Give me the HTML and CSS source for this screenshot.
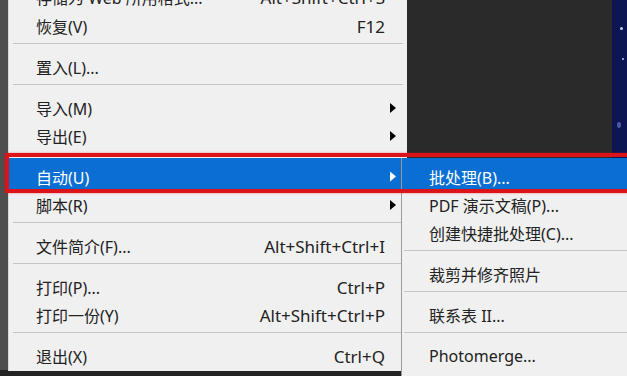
FILE: index.html
```html
<!DOCTYPE html>
<html lang="zh-CN">
<head>
  <meta charset="UTF-8">
  <title>文件菜单 - 自动</title>
  <link rel="stylesheet" href="styles.css">
</head>
<body>
  <div class="screen">
    <div class="edge"></div>

    <ul class="menu">
      <li class="item cut"><span class="label">存储为 Web 所用格式...</span><span class="key">Alt+Shift+Ctrl+S</span><span class="arrow"></span></li>
      <li class="item"><span class="label">恢复(V)</span><span class="key">F12</span><span class="arrow"></span></li>
      <li class="sep"></li>
      <li class="item"><span class="label">置入(L)...</span><span class="key"></span><span class="arrow"></span></li>
      <li class="sep"></li>
      <li class="item"><span class="label">导入(M)</span><span class="key"></span><span class="arrow has"></span></li>
      <li class="item"><span class="label">导出(E)</span><span class="key"></span><span class="arrow has"></span></li>
      <li class="sep tight"></li>
      <li class="item active"><span class="label">自动(U)</span><span class="key"></span><span class="arrow has"></span></li>
      <li class="item"><span class="label">脚本(R)</span><span class="key"></span><span class="arrow has"></span></li>
      <li class="sep"></li>
      <li class="item"><span class="label">文件简介(F)...</span><span class="key">Alt+Shift+Ctrl+I</span><span class="arrow"></span></li>
      <li class="sep"></li>
      <li class="item"><span class="label">打印(P)...</span><span class="key">Ctrl+P</span><span class="arrow"></span></li>
      <li class="item"><span class="label">打印一份(Y)</span><span class="key">Alt+Shift+Ctrl+P</span><span class="arrow"></span></li>
      <li class="sep"></li>
      <li class="item"><span class="label">退出(X)</span><span class="key">Ctrl+Q</span><span class="arrow"></span></li>
    </ul>

    <div class="canvas">
      <div class="sky">
        <i class="star s1"></i>
        <i class="star s2"></i>
        <i class="star s3"></i>
      </div>
    </div>

    <ul class="submenu">
      <li class="item active"><span class="label">批处理(B)...</span></li>
      <li class="item"><span class="label">PDF 演示文稿(P)...</span></li>
      <li class="item"><span class="label">创建快捷批处理(C)...</span></li>
      <li class="sep"></li>
      <li class="item"><span class="label">裁剪并修齐照片</span></li>
      <li class="sep"></li>
      <li class="item"><span class="label">联系表 II...</span></li>
      <li class="sep"></li>
      <li class="item"><span class="label">Photomerge...</span></li>
      <li class="item"><span class="label">合并到 HDR Pro...</span></li>
    </ul>

    <div class="mark"></div>
  </div>
</body>
</html>
```

FILE: styles.css
```css
body {
  margin: 0;
  background: #232323;
  font-family: "Noto Sans", "Noto Sans CJK SC", sans-serif;
  font-size: 16px;
  color: #222;
}
.screen {
  position: relative;
  width: 627px;
  height: 376px;
  overflow: hidden;
  display: flex;
  align-items: flex-start;
  background: #232323;
}
.edge {
  width: 8px;
  height: 370px;
  background: #4e4e4e;
  flex: none;
}
ul {
  list-style: none;
  margin: 0;
  padding: 0;
}
.menu {
  width: 399px;
  flex: none;
  background: #f0f0f0;
  border-left: 1px solid #d8d8d8;
  box-sizing: border-box;
  padding-bottom: 1px;
}
.item {
  display: flex;
  align-items: center;
  height: 28px;
  padding-left: 27px;
  white-space: nowrap;
}
.item .label {
  flex: 1;
}
.item .key {
  text-align: right;
  font-size: 17px;
}
.item .arrow {
  width: 22px;
  height: 10px;
  flex: none;
}
.item .arrow.has {
  background: #000;
  clip-path: polygon(5px 0, 11px 5px, 5px 10px);
}
.item.active {
  height: 33px;
  padding-top: 4px;
  box-sizing: border-box;
  background: #0b6ed2;
  color: #fff;
}
.item.active .arrow.has {
  background: #fff;
}
.item.cut {
  margin-top: -18px;
  height: 30px;
}
.sep {
  height: 1px;
  background: #c4c4c4;
  margin: 3px 4px 9px 4px;
}
.sep.tight {
  margin-bottom: 4px;
}
.canvas {
  flex: 1;
  height: 160px;
  display: flex;
  justify-content: flex-end;
  background: #2a2a2a;
}
.sky {
  position: relative;
  width: 15px;
  height: 160px;
  background: #0d1553;
}
.star {
  position: absolute;
  width: 3px;
  height: 3px;
  border-radius: 50%;
  background: #c8cdf0;
}
.s1 { left: 8px; top: 27px; }
.s2 { left: 10px; top: 58px; width: 2px; height: 2px; }
.s3 { left: 5px; top: 122px; width: 4px; height: 6px; background: #4b5aa8; }

.submenu {
  position: absolute;
  left: 401px;
  top: 158px;
  width: 226px;
  height: 230px;
  background: #f0f0f0;
  border-left: 1px solid #9a9a9a;
  box-sizing: border-box;
}
.submenu .item {
  padding-left: 27px;
}
.submenu .sep {
  margin: 3px 0 9px 2px;
}
.mark {
  position: absolute;
  left: 5px;
  top: 153px;
  width: 630px;
  height: 40px;
  border: 4px solid #dc1419;
  box-sizing: border-box;
  box-shadow: 0 0 2px rgba(220, 20, 25, 0.5);
}
```
